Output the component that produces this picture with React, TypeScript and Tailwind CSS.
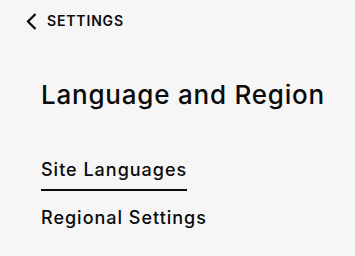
import React from 'react';

const sections = ['Site Languages', 'Regional Settings'];

export default function App() {
  const active = 0;

  return (
    <div className="min-h-screen w-full bg-[#f6f6f6] text-[#0a0a0a] font-['Inter',sans-serif]">
      <button type="button" className="flex items-center gap-[10px] pl-[26px] pt-[11px]">
        <svg width="11" height="17" viewBox="0 0 11 17" fill="none" stroke="currentColor" strokeWidth="2.2">
          <polyline points="9.5,1 2,8.5 9.5,16" />
        </svg>
        <span className="text-[14px] font-semibold tracking-[0.06em] leading-5">SETTINGS</span>
      </button>

      <h1 className="mt-[48px] pl-[41px] text-[26px] font-medium leading-8 tracking-[0.03em]">
        Language and Region
      </h1>

      <nav className="mt-[47px] flex flex-col items-start pl-[41px] gap-[15px]">
        {sections.map((s, i) => (
          <a
            key={s}
            className={
              'text-[18px] font-medium leading-6 pb-[7px] tracking-[0.055em] border-b-2 ' +
              (i === active ? 'border-[#0a0a0a]' : 'border-transparent')
            }
          >
            {s}
          </a>
        ))}
      </nav>
    </div>
  );
}
